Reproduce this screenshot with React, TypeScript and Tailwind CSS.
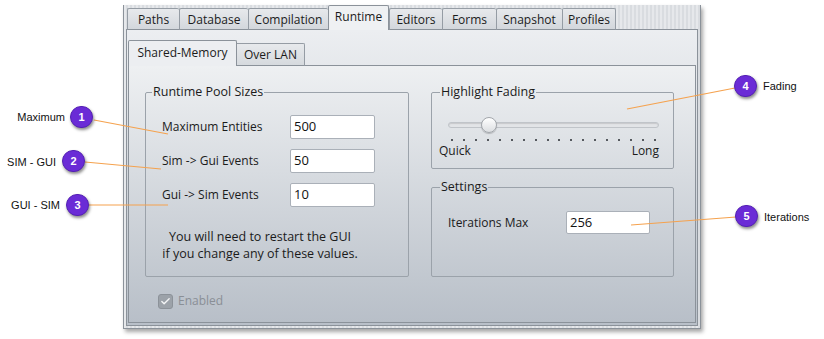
import { Check } from 'lucide-react';

const TABS: { label: string; w: string; active?: boolean }[] = [
  { label: 'Paths', w: 'w-[52px]' },
  { label: 'Database', w: 'w-[69px]' },
  { label: 'Compilation', w: 'w-[80px]' },
  { label: 'Runtime', w: 'w-[61px]', active: true },
  { label: 'Editors', w: 'w-[53px]' },
  { label: 'Forms', w: 'w-[54px]' },
  { label: 'Snapshot', w: 'w-[66px]' },
  { label: 'Profiles', w: 'w-[54px]' },
];

const POOL_ROWS = [
  { label: 'Maximum Entities', value: '500' },
  { label: 'Sim -> Gui Events', value: '50' },
  { label: 'Gui -> Sim Events', value: '10' },
];

// callout bubbles that sit over the screenshot
const CALLOUTS = [
  { n: 1, cls: 'left-[70px] top-[106px]', label: 'Maximum', labelCls: 'right-[759px] top-[110px]' },
  { n: 2, cls: 'left-[62px] top-[150px]', label: 'SIM - GUI', labelCls: 'right-[768px] top-[155px]' },
  { n: 3, cls: 'left-[66px] top-[194px]', label: 'GUI - SIM', labelCls: 'right-[764px] top-[198px]' },
  { n: 4, cls: 'left-[734px] top-[75px]', label: 'Fading', labelCls: 'left-[763px] top-[79px]' },
  { n: 5, cls: 'left-[735px] top-[205px]', label: 'Iterations', labelCls: 'left-[764px] top-[210px]' },
];

function Field({ value, w = 'w-[85px]', h = 'h-[24px]' }: { value: string; w?: string; h?: string }) {
  return (
    <div className={`${w} ${h} bg-white border border-[#aab0b8] rounded-[2px] flex items-center pl-[3px] text-[13px] text-[#111]`}>
      {value}
    </div>
  );
}

function Slider() {
  return (
    <div className="flex flex-col">
      <div className="relative h-[16px] flex items-center">
        <div className="w-full h-[6px] rounded-full bg-[#e2e4e7] border border-[#c0c4c9] shadow-[inset_0_1px_1px_rgba(0,0,0,0.12)]" />
        <div className="absolute left-[33px] top-0 w-[16px] h-[16px] rounded-full border border-[#a2a6ab] bg-[linear-gradient(#ffffff,#dcdee1)] shadow-[0_1px_1px_rgba(0,0,0,0.2)]" />
      </div>
      <div className="flex justify-between px-[3px] mt-[6px]">
        {Array.from({ length: 18 }).map((_, i) => (
          <span key={i} className="w-[2px] h-[2px] bg-[#55595e]" />
        ))}
      </div>
      <div className="flex justify-between mt-[2px] -ml-[9px] text-[12px] leading-[16px]">
        <span>Quick</span>
        <span>Long</span>
      </div>
    </div>
  );
}

export default function App() {
  return (
    <div className="relative w-[824px] h-[339px] bg-white overflow-hidden font-['Open_Sans',sans-serif] text-[#1b1b1b]">
      <div className="pl-[123px] pt-[5px]">
        {/* dialog frame */}
        <div className="w-[578px] h-[324px] flex flex-col border-x border-b border-[#8b929a] shadow-[2px_3px_4px_rgba(0,0,0,0.35)] bg-[repeating-linear-gradient(90deg,#e6e8eb_0px,#e6e8eb_2px,#d9dce0_2px,#d9dce0_4px)]">
          {/* outer tabs */}
          <div className="relative z-10 flex items-end h-[25px] pl-[3px] -mb-px text-[12px]">
            {TABS.map(t =>
              t.active ? (
                <div key={t.label} className={`${t.w} h-[25px] flex justify-center pt-[2px] border-x border-t border-[#8b929a] rounded-t-[2px] bg-[#eff1f3]`}>
                  {t.label}
                </div>
              ) : (
                <div key={t.label} className={`${t.w} h-[22px] flex items-center justify-center pt-[2px] border-l border-t border-[#959ca4] last:border-r rounded-t-[2px] bg-[linear-gradient(#e7e9ec,#d3d7dc)] border-b border-b-[#8b929a]`}>
                  {t.label}
                </div>
              )
            )}
          </div>

          {/* tab page */}
          <div className="flex-1 mx-[2px] mb-[2px] border border-[#8b929a] bg-[linear-gradient(#eceef1,#b9c0c9)] pt-[10px] px-[1px] pb-[2px] flex flex-col">
            {/* inner tabs */}
            <div className="relative z-10 flex items-end h-[26px] -mb-px text-[12px]">
              <div className="w-[109px] h-[26px] flex justify-center pt-[3px] border-x border-t border-[#8b929a] rounded-t-[2px] bg-[#eceef1]">
                Shared-Memory
              </div>
              <div className="w-[68px] h-[23px] flex items-center justify-center pt-[1px] border-r border-t border-[#959ca4] rounded-tr-[2px] bg-[linear-gradient(#e7e9ec,#d6dade)] border-b border-b-[#8b929a]">
                Over LAN
              </div>
            </div>

            {/* inner page */}
            <div className="flex-1 border border-[#8b929a] bg-[linear-gradient(#eef0f2,#b8bfc8)] pl-[16px] pt-[18px] flex flex-col text-[12px]">
              <div className="flex gap-[22px]">
                <fieldset className="w-[264px] h-[193px] border border-[#9ba2aa] rounded-[2px]">
                  <legend className="ml-[6px] px-[1px] leading-[16px] text-[12.5px]">Runtime Pool Sizes</legend>
                  <div className="pl-[16px]">
                    <div className="flex flex-col gap-[10px] mt-[15px]">
                      {POOL_ROWS.map(r => (
                        <div key={r.label} className="flex items-center">
                          <span className="w-[128px]">{r.label}</span>
                          <Field value={r.value} />
                        </div>
                      ))}
                    </div>
                    <div className="mt-[21px] w-[196px] whitespace-nowrap text-center text-[12.5px] leading-[17px]">
                      You will need to restart the GUI
                      <br />
                      if you change any of these values.
                    </div>
                  </div>
                </fieldset>

                <div className="flex flex-col gap-[10px]">
                  <fieldset className="w-[243px] h-[85px] border border-[#9ba2aa] rounded-[2px]">
                    <legend className="ml-[8px] px-[1px] leading-[16px] text-[12.5px]">Highlight Fading</legend>
                    <div className="mt-[17px] pl-[16px] pr-[14px]">
                      <Slider />
                    </div>
                  </fieldset>
                  <fieldset className="w-[243px] h-[98px] border border-[#9ba2aa] rounded-[2px]">
                    <legend className="ml-[8px] px-[1px] leading-[16px] text-[12.5px]">Settings</legend>
                    <div className="flex items-center mt-[16px] pl-[16px]">
                      <span className="w-[118px]">Iterations Max</span>
                      <Field value="256" w="w-[84px]" h="h-[23px]" />
                    </div>
                  </fieldset>
                </div>
              </div>

              <div className="flex items-center gap-[5px] mt-[15px] ml-[13px] text-[#8a8f96]">
                <span className="w-[15px] h-[15px] rounded-[3px] bg-[#9ca2a9] border border-[#8c9299] flex items-center justify-center">
                  <Check size={11} strokeWidth={3} color="#f4f5f6" />
                </span>
                Enabled
              </div>
            </div>
          </div>
        </div>
      </div>

      {/* callout leader lines */}
      <svg className="absolute inset-0 pointer-events-none" width="824" height="339">
        <g stroke="#f5a24e" strokeWidth="1.2" fill="none">
          <line x1="94" y1="120" x2="168" y2="134" />
          <line x1="85" y1="162" x2="161" y2="169" />
          <line x1="89" y1="205" x2="168" y2="205" />
          <line x1="735" y1="88" x2="627" y2="109" />
          <line x1="736" y1="217" x2="631" y2="225" />
        </g>
      </svg>

      {CALLOUTS.map(c => (
        <div key={c.n}>
          <div className={`absolute ${c.cls} w-[23px] h-[22px] rounded-full bg-[#6a2bd6] border border-[#5420b5] shadow-[1px_2px_3px_rgba(0,0,0,0.45)] flex items-center justify-center text-white text-[11px] font-bold font-['Liberation_Sans',sans-serif]`}>
            {c.n}
          </div>
          <span className={`absolute ${c.labelCls} text-[11px] leading-[14px] text-[#111] font-['Liberation_Sans',sans-serif]`}>
            {c.label}
          </span>
        </div>
      ))}
    </div>
  );
}
